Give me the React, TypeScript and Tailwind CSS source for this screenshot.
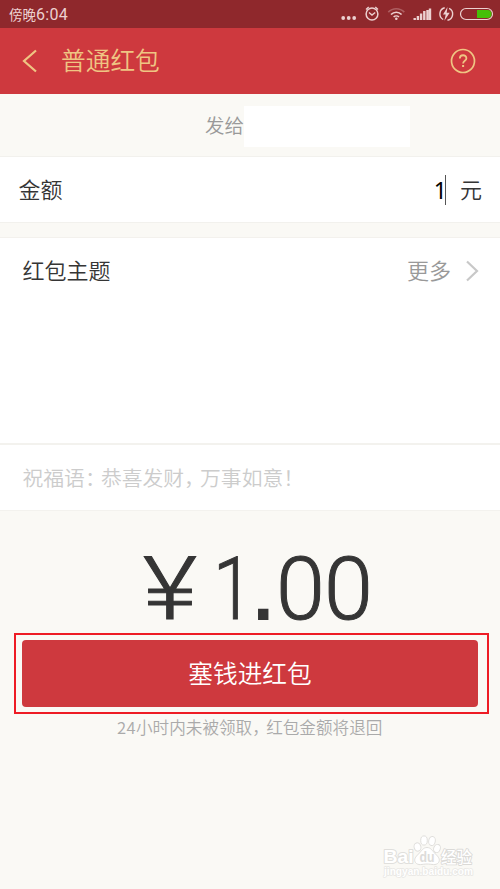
import type { ReactNode } from "react";

function StatusIcons() {
  return (
    <svg width="154" height="28" viewBox="340 0 154 28" fill="none" stroke="#ecd0d0">
      <g fill="#ecd0d0" stroke="none">
        <circle cx="343.2" cy="18" r="1.9" />
        <circle cx="348.7" cy="18" r="1.9" />
        <circle cx="354.2" cy="18" r="1.9" />
      </g>
      <circle cx="372" cy="14" r="5.9" strokeWidth="1.5" />
      <path d="M369 12.5l3 2.5 3.2-2.5M366 9.5l2.7-2.4M378 9.5l-2.7-2.4" strokeWidth="1.4" />
      <path d="M388.3 12.2c4.5-4.6 11.5-4.6 16 0" strokeWidth="1.7" opacity=".32" />
      <path d="M391 14.5c3-3 7.6-3 10.6 0" strokeWidth="1.7" />
      <path d="M393.6 17c1.5-1.5 3.9-1.5 5.4 0" strokeWidth="1.5" />
      <circle cx="396.3" cy="18.7" r="1.3" fill="#ecd0d0" stroke="none" />
      <path d="M414.7 20v-2M417.9 20v-4M421.1 20v-6.5M424.3 20v-9M427.5 20v-10M430 20v-11.5" strokeWidth="2.4" />
      <path d="M444.7 7.7a6.4 6.4 0 0 0-1.5 11.8M447.5 20.3a6.4 6.4 0 0 0 1.6-12" strokeWidth="1.4" />
      <path d="M447.5 7l-4.5 7.5h2.7l-1.3 6.2 5.3-8h-3z" fill="#ecd0d0" stroke="none" />
      <rect x="460.5" y="8.5" width="32" height="11" rx="5.5" strokeWidth="1.2" />
      <path d="M477 10h10.5a4 4 0 0 1 0 8H477z" fill="#46bf08" stroke="none" />
    </svg>
  );
}

function Mark({ children }: { children: ReactNode }) {
  return <span className="inline-block w-[16px] [font-feature-settings:'halt']">{children}</span>;
}

function Watermark() {
  return (
    <svg width="100" height="52" viewBox="380 830 100 52" className="absolute left-[380px] top-[830px]">
      <g fill="#ffffff" stroke="#e0dfdc" strokeWidth="1">
        <ellipse cx="417.5" cy="847" rx="3.4" ry="4.2" transform="rotate(-15 417.5 847)" />
        <ellipse cx="424" cy="840.5" rx="3.3" ry="4.6" />
        <ellipse cx="432" cy="841" rx="3.3" ry="4.6" transform="rotate(10 432 841)" />
        <ellipse cx="437" cy="848.5" rx="3.3" ry="4.2" transform="rotate(20 437 848.5)" />
        <path d="M427 847.5c4 0 5.5 3.5 8.5 6.5s5 5.5 3 8.5c-2.5 3.5-7 1.5-11.5 1.5s-9 2-11.5-1.5c-2-3 0-5.5 3-8.5s4.5-6.5 8.5-6.5z" />
      </g>
      <g fontFamily="'Liberation Sans', sans-serif" strokeLinejoin="round">
        <text x="383.5" y="863" fontSize="19" fontWeight="700" fill="#ffffff" stroke="#e0dfdc" strokeWidth="2" paintOrder="stroke" textLength="30" lengthAdjust="spacingAndGlyphs">Bai</text>
        <text x="419.5" y="861.5" fontSize="14" fontWeight="700" fill="#dddcda" textLength="15" lengthAdjust="spacingAndGlyphs">du</text>
        <text x="441" y="862.5" fontSize="15.5" fontWeight="500" fill="#ffffff" stroke="#dbdad7" strokeWidth="1.8" paintOrder="stroke" textLength="31" lengthAdjust="spacingAndGlyphs" fontFamily="'Noto Sans CJK SC', sans-serif">经验</text>
        <text x="384" y="875" fontSize="10" fontWeight="700" fill="#ffffff" stroke="#e8e7e4" strokeWidth="1.5" paintOrder="stroke" textLength="89" lengthAdjust="spacingAndGlyphs">jingyan.baidu.com</text>
      </g>
    </svg>
  );
}

export default function App() {
  return (
    <div className="relative flex h-[889px] w-[500px] flex-col overflow-hidden bg-[#faf9f5] font-['Noto_Sans_CJK_SC',sans-serif] font-[350] text-[#353535]">
      <div className="flex h-[28px] shrink-0 items-center justify-between bg-[#8f282c] pl-[9px] pr-[6px]">
        <span className="flex items-center whitespace-nowrap text-[13.5px] font-normal leading-[28px] text-[#ecd0d0]">
          傍晚<span className="pt-px font-['Roboto',sans-serif] text-[16px] tracking-[0.3px]">6:04</span>
        </span>
        <StatusIcons />
      </div>

      <header className="flex h-[66px] shrink-0 items-center bg-[#ce393e] pl-[21px] pr-[24px] text-[#efc583]">
        <svg width="18" height="24" viewBox="0 0 18 24" fill="none" stroke="currentColor" strokeWidth="2.2">
          <path d="M15 1.5L3 12l12 10.5" />
        </svg>
        <h1 className="ml-[22px] pb-[3px] text-[24.7px] font-[350] leading-[63px]">普通红包</h1>
        <svg className="ml-auto" width="26" height="26" viewBox="0 0 26 26" fill="none" stroke="currentColor">
          <circle cx="13" cy="13" r="11.5" strokeWidth="1.7" />
          <path d="M9.8 10.5c0-4.3 6.6-4.3 6.6-.3 0 2.6-3.3 2.5-3.3 5.3" strokeWidth="1.8" />
          <path d="M12.1 17h2v2h-2z" fill="currentColor" stroke="none" />
        </svg>
      </header>

      <div className="flex h-[62px] shrink-0 items-center pl-[205px] text-[19.5px] text-[#999999]">
        <span className="w-[39px] whitespace-nowrap">发给</span>
        <span className="mt-[3px] h-[41px] w-[166px] bg-white" />
      </div>

      <div className="flex h-[67px] shrink-0 items-center border-y border-[#f2f1ed] bg-white pl-[18.5px] pr-[18px] text-[22px]">
        <span className="pb-[2px]">金额</span>
        <span className="ml-auto pt-px font-['Noto_Sans',sans-serif] text-[23px] font-normal leading-none tracking-[-2px] text-black">1</span>
        <span className="h-[30px] w-px bg-[#555555]" />
        <span className="ml-[14px] pb-[2px]">元</span>
      </div>

      <div className="mt-[14px] flex h-[206px] shrink-0 flex-col border-t border-[#f3f1ed] bg-white pl-[22.5px] pr-[21px]">
        <div className="flex h-[66px] items-center text-[22px]">
          <span className="pb-[4px]">红包主题</span>
          <span className="ml-auto pb-[4px] text-[#999999]">更多</span>
          <svg className="ml-[14px]" width="14" height="22" viewBox="0 0 14 22" fill="none" stroke="#c8c8c8" strokeWidth="2.2">
            <path d="M2 1.5L12 11 2 20.5" />
          </svg>
        </div>
      </div>

      <div className="flex h-[68px] shrink-0 items-center whitespace-nowrap border-b border-t-2 border-[#f3f2ee] bg-white pl-[22.5px] text-[20.8px] text-[#cccccc]">
        <span>祝福语<Mark>：</Mark>恭喜发财<Mark>，</Mark>万事如意！</span>
      </div>

      <div className="flex h-[122px] shrink-0 items-start pl-[143px] pt-[26px] font-['Roboto',sans-serif] text-[88px] font-light leading-[104px] text-[#353535] [-webkit-text-stroke:1px_#353535]">
        <span className="w-[70px]"><span className="inline-block origin-left scale-x-[1.19]">¥</span></span>
        <span className="w-[38px]"><span className="inline-block origin-left scale-x-[0.82]">1</span></span>
        <span className="w-[25px] font-['Liberation_Sans',sans-serif] text-[88px] font-normal [-webkit-text-stroke:2px_#353535]">.</span>
        <span className="w-[48px]">0</span>
        <span>0</span>
      </div>

      <div className="ml-[14px] flex h-[81px] w-[475px] shrink-0 items-start border-2 border-[#ee1c25] pl-[6px] pt-[5px]">
        <button className="h-[67px] w-[456px] rounded-[4px] bg-[#ce393e] pb-[2px] text-[24.7px] font-[350] leading-[65px] text-white">塞钱进红包</button>
      </div>

      <p className="flex h-[26px] items-center whitespace-nowrap pl-[117px] text-[16.6px] text-[#aaaaaa]">
        <span><span className="tracking-[0.4px]">24</span>小时内未被领取<span className="inline-block w-[14px] [font-feature-settings:'halt']">，</span>红包金额将退回</span>
      </p>
      <Watermark />
    </div>
  );
}
